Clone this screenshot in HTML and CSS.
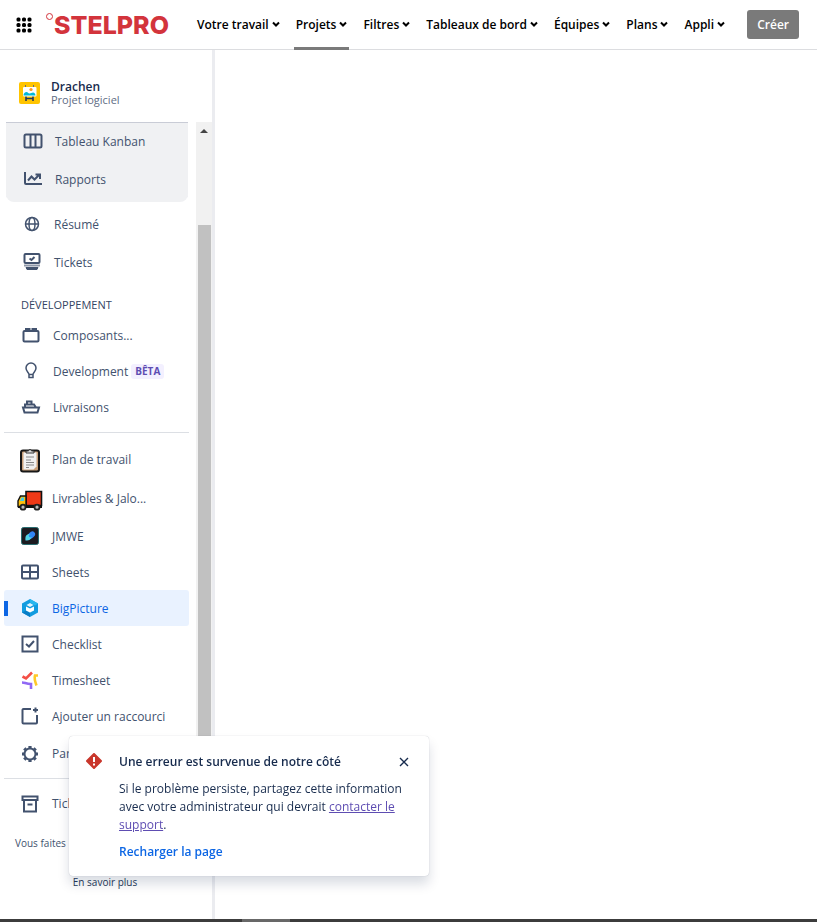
FILE: index.html
```html
<!DOCTYPE html>
<html lang="fr">
<head>
    <meta charset="UTF-8">
    <meta name="viewport" content="width=device-width, initial-scale=1.0">
    <title>Drachen - BigPicture</title>
    <link rel="stylesheet" href="styles.css">
</head>
<body>
    <header class="topbar">
        <button class="app-switcher" aria-label="Applications">
            <svg width="16" height="16" viewBox="0 0 16 16" fill="#000">
                <rect x="0.500" y="0.500" width="4" height="4" rx="1.500"/><rect x="6" y="0.500" width="4" height="4" rx="1.500"/><rect x="11.500" y="0.500" width="4" height="4" rx="1.500"/>
                <rect x="0.500" y="6" width="4" height="4" rx="1.500"/><rect x="6" y="6" width="4" height="4" rx="1.500"/><rect x="11.500" y="6" width="4" height="4" rx="1.500"/>
                <rect x="0.500" y="11.500" width="4" height="4" rx="1.500"/><rect x="6" y="11.500" width="4" height="4" rx="1.500"/><rect x="11.500" y="11.500" width="4" height="4" rx="1.500"/>
            </svg>
        </button>
        <a class="logo" href="#"><span class="logo-dot"></span>STELPRO</a>
        <nav class="menu">
            <button class="menu-item">Votre travail <svg class="chevron" viewBox="0 0 8 6"><path d="M1 1.5 4 4.5 7 1.5"/></svg></button>
            <button class="menu-item active">Projets <svg class="chevron" viewBox="0 0 8 6"><path d="M1 1.5 4 4.5 7 1.5"/></svg></button>
            <button class="menu-item">Filtres <svg class="chevron" viewBox="0 0 8 6"><path d="M1 1.5 4 4.5 7 1.5"/></svg></button>
            <button class="menu-item">Tableaux de bord <svg class="chevron" viewBox="0 0 8 6"><path d="M1 1.5 4 4.5 7 1.5"/></svg></button>
            <button class="menu-item">Équipes <svg class="chevron" viewBox="0 0 8 6"><path d="M1 1.5 4 4.5 7 1.5"/></svg></button>
            <button class="menu-item">Plans <svg class="chevron" viewBox="0 0 8 6"><path d="M1 1.5 4 4.5 7 1.5"/></svg></button>
            <button class="menu-item">Appli <svg class="chevron" viewBox="0 0 8 6"><path d="M1 1.5 4 4.5 7 1.5"/></svg></button>
        </nav>
        <button class="create">Créer</button>
    </header>

    <div class="page">
        <aside class="sidebar">
            <div class="project">
                <svg width="22" height="22" viewBox="0 0 22 22">
                    <rect width="21" height="22" rx="2" fill="#ffc400"/>
                    <path d="M6.500 3v2M14.500 3v2" stroke="#5e6c84"/>
                    <path d="M7 14v5M14 14v5M7 16.500h7" stroke="#253858" stroke-width="1.600" fill="none"/>
                    <rect x="4" y="5" width="13.500" height="9.500" rx="1" fill="#fff"/>
                    <circle cx="12" cy="7.500" r="1.600" fill="#ff991f"/>
                    <path d="M4.500 13.500c0-2 1.500-3.500 3-3.500 1.500 0 1.500 1.500 3 1.500s2-1 3.500-1 2.500 1.500 2.500 3z" fill="#00b8d9"/>
                </svg>
                <div>
                    <div class="project-name">Drachen</div>
                    <div class="project-type">Projet logiciel</div>
                </div>
            </div>

            <div class="scroller">
                <nav class="nav">
                    <div class="group board">
                        <a class="row" href="#"><span class="icon"><svg class="line" width="20" height="20" viewBox="0 0 20 20"><rect x="1.500" y="3.500" width="17" height="13" rx="1.500"/><path d="M7.500 3.500v13M12.500 3.500v13"/></svg></span>Tableau Kanban</a>
                        <a class="row" href="#"><span class="icon"><svg class="line" width="20" height="20" viewBox="0 0 20 20"><path d="M2 3v11a1 1 0 0 0 1 1h16M5 11.500l3.500-4 3 3L16 6M12.500 5.500H17V10"/></svg></span>Rapports</a>
                    </div>
                    <div class="group summary">
                        <a class="row" href="#"><span class="icon"><svg class="line thin" width="18" height="18" viewBox="0 0 18 18"><circle cx="9" cy="9" r="6.500"/><ellipse cx="9" cy="9" rx="3" ry="6.500"/><path d="M2.500 9h13"/></svg></span>Résumé</a>
                        <a class="row" href="#"><span class="icon"><svg class="line" width="20" height="20" viewBox="0 0 20 20"><rect x="2.500" y="2" width="15" height="9" rx="1"/><path d="M7.500 6.500l2 1.500 3-3"/><path d="M2 13.500h16" opacity=".6"/><path d="M4 15.500l1 2h10l1-2z" fill="#42526e" stroke-width="1"/></svg></span>Tickets</a>
                    </div>
                    <h2 class="group-title">DÉVELOPPEMENT</h2>
                    <div class="group dev">
                        <a class="row" href="#"><span class="icon"><svg class="line" width="18" height="18" viewBox="0 0 18 18"><rect x="1.500" y="5" width="15" height="10.500" rx="1"/><path d="M4 5V3h3.500v2M10.500 5V3H14v2"/></svg></span>Composants...</a>
                        <a class="row" href="#"><span class="icon"><svg class="line thin" width="18" height="18" viewBox="0 0 18 18"><path d="M7 12.500c0-2-3-3-3-6.500a5 5 0 0 1 10 0c0 3.500-3 4.500-3 6.500zM7 13v2.500h4V13"/></svg></span>Development<span class="badge">BÊTA</span></a>
                        <a class="row" href="#"><span class="icon"><svg class="line" width="20" height="18" viewBox="0 0 20 18"><path d="M2 9.500h16l-1.500 5h-13zM4 9.500v-3h9l2 3M6 6.500V3.500h4.500v3"/></svg></span>Livraisons</a>
                    </div>
                    <hr class="divider">
                    <div class="group apps">
                        <a class="row tall" href="#"><span class="icon"><svg width="22" height="26" viewBox="0 0 22 26">
                            <rect x="2" y="3.500" width="18" height="21" rx="2" fill="#c9a07a" stroke="#171717" stroke-width="2"/>
                            <path d="M4.500 5.500h13v14l-3 3h-10z" fill="#f1f1f1"/>
                            <path d="M7 6V4h2.500a1.500 1.500 0 0 1 3 0H15v2z" fill="#ddd" stroke="#333"/>
                            <path d="M7 10h8M7 13h5M7 15.500h8M7 18h8M7 20.500h3" stroke="#888" stroke-width="1.200"/>
                        </svg></span>Plan de travail</a>
                        <a class="row tall" href="#"><span class="icon"><svg class="truck" width="26" height="21" viewBox="0 0 26 21">
                            <path d="M9 1.500h15.500v14H9z" fill="#f03a17" stroke="#111" stroke-width="1.600"/>
                            <path d="M1 16.500V11l2.500-5H9v10.500z" fill="#ffc20e" stroke="#111" stroke-width="1.400"/>
                            <path d="M3 11l1.500-3.500H7V11z" fill="#45c8e8"/>
                            <path d="M1 17h24" stroke="#111" stroke-width="2"/>
                            <circle cx="6" cy="17.200" r="2.500" fill="#bbb" stroke="#222" stroke-width="1.800"/>
                            <circle cx="20" cy="17.200" r="2.500" fill="#bbb" stroke="#222" stroke-width="1.800"/>
                        </svg></span>Livrables &amp; Jalo...</a>
                        <a class="row" href="#"><span class="icon"><svg width="18" height="18" viewBox="0 0 18 18">
                            <rect x=".5" y=".5" width="17" height="17" rx="2" fill="#1b1b20" stroke="#286c70"/>
                            <ellipse cx="10.500" cy="8" rx="4" ry="3" fill="#3385f5" transform="rotate(-45 10.500 8)"/>
                            <path d="M4.500 13.500C4 9.500 5 7.500 8 7c3 0 3.500 2.500 2 4.500s-3.500 2-5.500 2z" fill="#51d5e7"/>
                            <circle cx="9.500" cy="8.800" r="1.800" fill="#2b8df4"/>
                        </svg></span>JMWE</a>
                        <a class="row" href="#"><span class="icon"><svg class="line" width="20" height="18" viewBox="0 0 20 18"><rect x="2" y="2.500" width="16" height="13" rx="1"/><path d="M10 2.500v13M2 9h16"/></svg></span>Sheets</a>
                        <a class="row selected" href="#"><span class="icon"><svg width="18" height="18" viewBox="0 0 18 18">
                            <path d="M9 0l8 4.500v9L9 18l-8-4.500v-9z" fill="#129ce0"/>
                            <path d="M9 0l8 4.500-3 2L9 3.500z" fill="#28b8ee"/><path d="M1 13.500L9 18v-4l-4-2.500z" fill="#087dc6"/>
                            <path d="M5 7.500l4 2 4-2v4L9 13.500l-4-2z" fill="#fff"/>
                            <path d="M5.500 6L9 4l3.500 2L9 8z" fill="#e3f6ff"/>
                        </svg></span>BigPicture</a>
                        <a class="row" href="#"><span class="icon"><svg class="line" width="18" height="18" viewBox="0 0 18 18"><rect x="1.500" y="1.500" width="15" height="15"/><path d="M5 9l3 2.500L13 6"/></svg></span>Checklist</a>
                        <a class="row" href="#"><span class="icon"><svg width="18" height="18" viewBox="0 0 18 18" fill="none" stroke-width="2.600">
                            <path d="M1.500 5.500L5 7.500l6-6" stroke="#f44f46"/>
                            <path d="M17 4.500h-3c-1 3 0 6 1.500 10" stroke="#ffc928"/>
                            <path d="M1 11.500c3 0 4 1.500 9 1.500v5" stroke="#9068f5"/>
                        </svg></span>Timesheet</a>
                        <a class="row" href="#"><span class="icon"><svg class="line" width="18" height="18" viewBox="0 0 18 18"><path d="M10 2H2.500a1 1 0 0 0-1 1v12.500a1 1 0 0 0 1 1H15a1 1 0 0 0 1-1V8M14.500.5v5M12 3h5"/></svg></span>Ajouter un raccourci</a>
                        <a class="row tall" href="#"><span class="icon"><svg width="18" height="18" viewBox="0 0 18 18" fill="none" stroke="#42526e"><circle cx="9" cy="9" r="5.500" stroke-width="2"/><path d="M9 3V1M9 17v-2M3 9H1M17 9h-2M4.800 4.800 3.300 3.300M14.700 14.700l-1.500-1.500M4.800 13.200l-1.500 1.500M14.700 3.300l-1.500 1.500" stroke-width="3.200"/></svg></span>Paramètres</a>
                    </div>
                    <hr class="divider">
                    <div class="group apps">
                        <a class="row tall" href="#"><span class="icon"><svg class="line" width="18" height="18" viewBox="0 0 18 18"><path d="M1.500 1.500h15V5h-15zM3 5v11.500h12V5M6.500 9.500h5"/></svg></span>Tickets</a>
                    </div>
                </nav>
                <div class="scrollbar">
                    <svg class="scroll-arrow" width="16" height="16" viewBox="0 0 16 16"><path d="M4 11l4-4 4 4z" fill="#444"/></svg>
                    <div class="thumb"></div>
                </div>
            </div>

            <footer class="sidebar-footer">
                <p>Vous faites</p>
                <a href="#">En savoir plus</a>
            </footer>
        </aside>
        <main class="content"></main>
    </div>

    <div class="bottom-bar"><div class="bottom-thumb"></div></div>

    <section class="flag" role="alert">
        <svg class="flag-icon" width="16" height="16" viewBox="0 0 16 16">
            <path d="M8 1 15 8 8 15 1 8z" fill="#c9372c" stroke="#c9372c" stroke-width="2" stroke-linejoin="round"/>
            <path d="M8 4v5M8 10.500v2" stroke="#fff" stroke-width="2"/>
        </svg>
        <div class="flag-body">
            <div class="flag-head">
                <h3>Une erreur est survenue de notre côté</h3>
                <button class="close" aria-label="Fermer">
                    <svg width="10" height="10" viewBox="0 0 10 10"><path d="M1 1l8 8M9 1 1 9" stroke="#172b4d" stroke-width="1.400"/></svg>
                </button>
            </div>
            <p>Si le problème persiste, partagez cette information avec votre administrateur qui devrait <a class="support" href="#">contacter le support</a>.</p>
            <button class="reload">Recharger la page</button>
        </div>
    </section>
</body>
</html>
```

FILE: styles.css
```css
* {
    box-sizing: border-box;
}
body {
    margin: 0;
    min-height: 100vh;
    display: flex;
    flex-direction: column;
    font-family: "Open Sans", "Noto Sans", sans-serif;
    font-size: 12px;
    color: #172b4d;
    background: #fff;
}
button {
    font: inherit;
    border: 0;
    padding: 0;
    background: none;
    cursor: pointer;
}
a {
    text-decoration: none;
    color: inherit;
}
p, h2, h3 {
    margin: 0;
}

/* top bar */
.topbar {
    display: flex;
    align-items: center;
    height: 50px;
    padding: 0 18px 0 16px;
    border-bottom: 1px solid #dcdde0;
}
.app-switcher {
    display: flex;
    margin-right: 14px;
}
.logo {
    display: flex;
    width: 140px;
    font-family: Inter, sans-serif;
    font-size: 25px;
    font-weight: 800;
    line-height: 30px;
    color: #d3343c;
}
.logo-dot {
    width: 7px;
    height: 7px;
    margin: 3px 1px 0 0;
    border: 1px solid #d3343c;
    border-radius: 50%;
}
.menu {
    display: flex;
    align-self: stretch;
    gap: 12px;
    margin-left: 9px;
}
.menu-item {
    display: flex;
    align-items: center;
    gap: 3px;
    margin-bottom: -1px;
    padding: 1px 2px 0;
    border-bottom: 3px solid transparent;
    font-weight: 600;
    color: #000;
    white-space: nowrap;
}
.menu-item.active {
    border-bottom-color: #7a7a7a;
}
.chevron {
    width: 8px;
    height: 6px;
    fill: none;
    stroke: #000;
    stroke-width: 2;
}
.create {
    height: 29px;
    margin-left: auto;
    padding: 0 10px;
    border-radius: 3px;
    background: #7a7a7a;
    color: #fff;
    font-weight: 600;
}

/* sidebar */
.page {
    flex: 1;
    display: flex;
}
.sidebar {
    width: 215px;
    border-right: 3px solid #ebecf0;
}
.project {
    display: flex;
    align-items: center;
    gap: 10px;
    height: 72px;
    padding: 14px 0 0 19px;
}
.project-name {
    font-weight: 600;
    line-height: 14px;
}
.project-type {
    font-size: 11px;
    line-height: 12px;
    color: #5e6c84;
}
.scroller {
    display: flex;
}
.nav {
    flex: 1;
    padding: 0 7px 0 4px;
}
.row {
    display: flex;
    align-items: center;
    height: 36px;
    color: #42526e;
    white-space: nowrap;
}
.row.tall {
    height: 39px;
}
.board .row,
.summary .row {
    height: 38px;
}
.icon {
    display: flex;
    justify-content: center;
    width: 26px;
    margin-right: 9px;
}
.board {
    margin: 0 1px 3px 2px;
    padding: 0 0 4px 14px;
    border-radius: 0 0 8px 8px;
    background: #f0f1f3;
    box-shadow: inset 0 1px #c9ccd6;
}
.line {
    fill: none;
    stroke: #42526e;
    stroke-width: 2;
}
.thin {
    stroke-width: 1.5;
}
.summary {
    padding-left: 15px;
}
.group-title {
    padding: 16px 0 4px 17px;
    font-size: 11px;
    font-weight: 400;
    line-height: 16px;
    color: #344563;
}
.dev .row {
    padding-left: 14px;
}
.badge {
    margin-left: 3px;
    padding: 0 4px;
    border-radius: 3px;
    background: #f3f0ff;
    color: #5e4db2;
    font-size: 10px;
    font-weight: 700;
    line-height: 15px;
}
.divider {
    height: 1px;
    margin: 7px 0;
    border: 0;
    background: #dcdfe4;
}
.apps .row {
    padding-left: 13px;
}
.apps + .divider {
    margin: 5px 0;
}
.truck {
    margin-top: 4px;
}
.row.selected {
    border-radius: 3px;
    background: linear-gradient(#0c66e4, #0c66e4) 0 50% / 4px 15px no-repeat #e9f2ff;
    color: #0c66e4;
}
.scrollbar {
    width: 16px;
    padding: 0 1px 0 2px;
    background: #f1f1f1;
}
.scroll-arrow {
    display: block;
    margin-left: -2px;
}
.thumb {
    height: 560px;
    margin-top: 87px;
    background: #c1c1c1;
}
.sidebar-footer {
    padding: 11px 0 0;
    font-size: 10px;
    line-height: 18px;
    text-align: center;
    color: #42526e;
}
.sidebar-footer p {
    padding-left: 15px;
    text-align: left;
}
.sidebar-footer a {
    display: block;
    margin: 21px 2px 0 0;
    color: #253858;
}
.content {
    flex: 1;
}
.bottom-bar {
    height: 3px;
    background: #3c3c3c;
}
.bottom-thumb {
    width: 48px;
    height: 3px;
    margin-left: 242px;
    background: #686868;
}

/* error message over the page */
.flag {
    position: fixed;
    left: 69px;
    bottom: 46px;
    display: flex;
    gap: 17px;
    width: 360px;
    padding: 17px 18px 15px 17px;
    border-radius: 4px;
    background: #fff;
    box-shadow: 0 8px 12px rgba(9, 30, 66, .15), 0 0 1px rgba(9, 30, 66, .31);
    line-height: 18px;
}
.flag-icon {
    flex: none;
}
.flag-body {
    flex: 1;
}
.flag-head {
    display: flex;
    justify-content: space-between;
    margin-bottom: 9px;
}
.flag h3 {
    font-size: 12px;
    font-weight: 600;
}
.close {
    display: flex;
    align-items: center;
    margin-right: 2px;
}
.support {
    color: #5e4db2;
    text-decoration: underline;
}
.reload {
    margin-top: 9px;
    color: #0c66e4;
    font-weight: 600;
}
```
